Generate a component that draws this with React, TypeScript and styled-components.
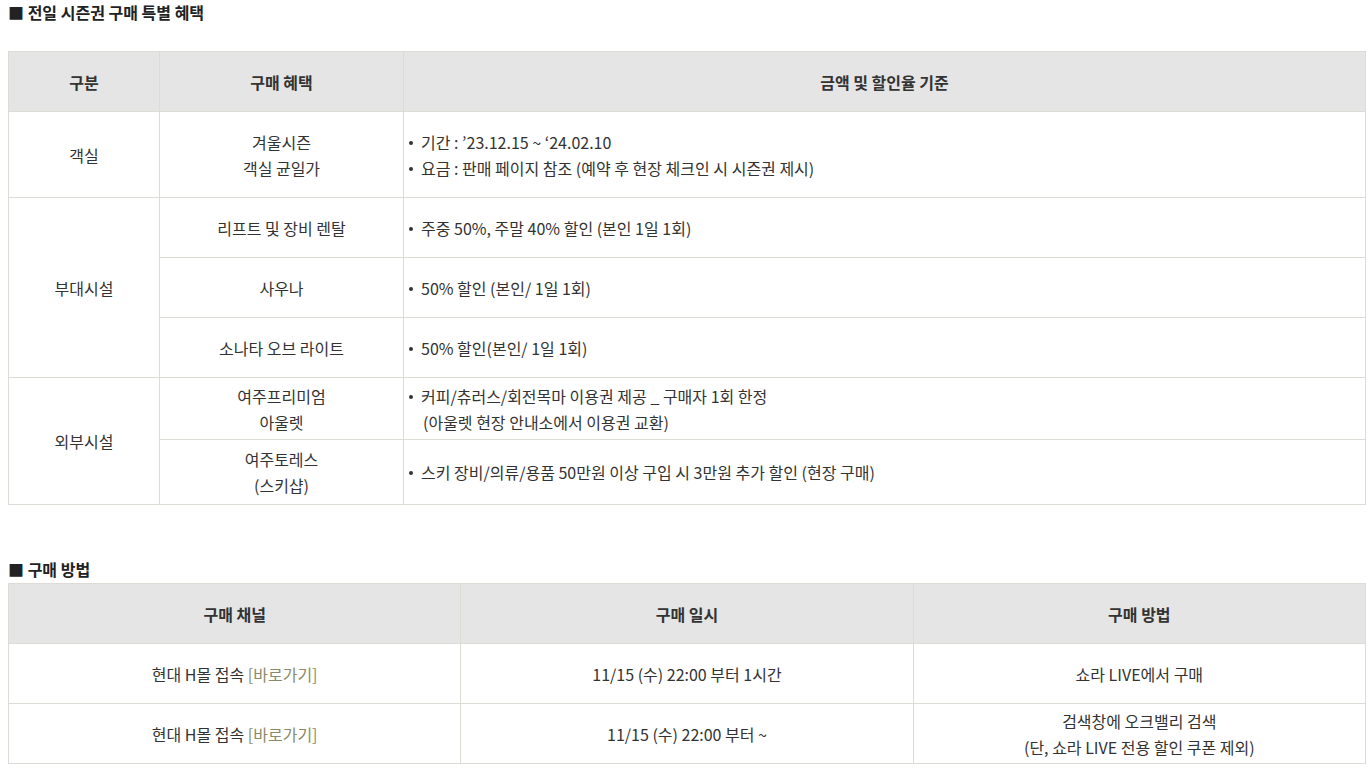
import React from "react";
import styled, { createGlobalStyle } from "styled-components";

const GlobalStyle = createGlobalStyle`
  body {
    margin: 0;
    background: #fff;
    font-family: "Noto Sans CJK KR", "Noto Sans", sans-serif;
    color: #333;
  }
`;

const Page = styled.div`
  padding: 0 4px 0 8px;
  display: flex;
  flex-direction: column;
`;

const Title = styled.h3<{ $gap: number }>`
  margin: 0 0 ${(p) => p.$gap}px;
  font-size: 16px;
  line-height: 24px;
  font-weight: 700;
  color: #222;
`;

const Table = styled.table`
  width: 100%;
  border-collapse: collapse;
  table-layout: fixed;
  font-size: 16px;
  line-height: 26px;
`;

const Th = styled.th`
  height: 59px;
  padding: 0 8px;
  background: #e5e5e5;
  border: 1px solid #dddbd6;
  font-weight: 700;
  color: #333;
  text-align: center;
`;

const Row = styled.tr<{ $h: number }>`
  height: ${(p) => p.$h}px;
`;

const Td = styled.td<{ $left?: boolean }>`
  padding: 0 5px;
  border: 1px solid #dddbd6;
  text-align: ${(p) => (p.$left ? "left" : "center")};
  vertical-align: middle;
  color: #333;
`;

const List = styled.ul`
  list-style: none;
  margin: 0;
  padding: 0;
`;

const Item = styled.li`
  display: flex;
`;

const Dot = styled.span`
  flex: 0 0 12px;
  height: 26px;
  display: flex;
  align-items: center;
  &::before {
    content: "";
    width: 4px;
    height: 4px;
    margin-top: 2px;
    border-radius: 50%;
    background: #333;
  }
`;

const Indent = styled.span`
  padding-left: 2px;
`;

const Link = styled.a`
  color: #8a8a6a;
  text-decoration: none;
`;

const Spacer = styled.div`
  height: 52px;
`;

const Bullets = ({ items }: { items: React.ReactNode[] }) => (
  <List>
    {items.map((t, i) => (
      <Item key={i}>
        <Dot />
        <span>{t}</span>
      </Item>
    ))}
  </List>
);

const App = () => (
  <Page>
    <GlobalStyle />
    <Title $gap={27}>■ 전일 시즌권 구매 특별 혜택</Title>
    <Table>
      <colgroup>
        <col style={{ width: 151 }} />
        <col style={{ width: 244 }} />
        <col />
      </colgroup>
      <thead>
        <tr>
          <Th>구분</Th>
          <Th>구매 혜택</Th>
          <Th>금액 및 할인율 기준</Th>
        </tr>
      </thead>
      <tbody>
        <Row $h={86}>
          <Td>객실</Td>
          <Td>
            겨울시즌
            <br />
            객실 균일가
          </Td>
          <Td $left>
            <Bullets
              items={[
                "기간 : ’23.12.15 ~ ‘24.02.10",
                "요금 : 판매 페이지 참조 (예약 후 현장 체크인 시 시즌권 제시)",
              ]}
            />
          </Td>
        </Row>
        <Row $h={60}>
          <Td rowSpan={3}>부대시설</Td>
          <Td>리프트 및 장비 렌탈</Td>
          <Td $left>
            <Bullets items={["주중 50%, 주말 40% 할인 (본인 1일 1회)"]} />
          </Td>
        </Row>
        <Row $h={60}>
          <Td>사우나</Td>
          <Td $left>
            <Bullets items={["50% 할인 (본인/ 1일 1회)"]} />
          </Td>
        </Row>
        <Row $h={60}>
          <Td>소나타 오브 라이트</Td>
          <Td $left>
            <Bullets items={["50% 할인(본인/ 1일 1회)"]} />
          </Td>
        </Row>
        <Row $h={62}>
          <Td rowSpan={2}>외부시설</Td>
          <Td>
            여주프리미엄
            <br />
            아울렛
          </Td>
          <Td $left>
            <Bullets
              items={[
                <>
                  커피/츄러스/회전목마 이용권 제공 _ 구매자 1회 한정
                  <br />
                  <Indent>(아울렛 현장 안내소에서 이용권 교환)</Indent>
                </>,
              ]}
            />
          </Td>
        </Row>
        <Row $h={65}>
          <Td>
            여주토레스
            <br />
            (스키샵)
          </Td>
          <Td $left>
            <Bullets
              items={[
                "스키 장비/의류/용품 50만원 이상 구입 시 3만원 추가 할인 (현장 구매)",
              ]}
            />
          </Td>
        </Row>
      </tbody>
    </Table>

    <Spacer />
    <Title $gap={2}>■ 구매 방법</Title>
    <Table>
      <thead>
        <tr>
          <Th>구매 채널</Th>
          <Th>구매 일시</Th>
          <Th>구매 방법</Th>
        </tr>
      </thead>
      <tbody>
        <Row $h={60}>
          <Td>
            현대 H몰 접속 <Link href="#">[바로가기]</Link>
          </Td>
          <Td>11/15 (수) 22:00 부터 1시간</Td>
          <Td>쇼라 LIVE에서 구매</Td>
        </Row>
        <Row $h={60}>
          <Td>
            현대 H몰 접속 <Link href="#">[바로가기]</Link>
          </Td>
          <Td>11/15 (수) 22:00 부터 ~</Td>
          <Td>
            검색창에 오크밸리 검색
            <br />
            (단, 쇼라 LIVE 전용 할인 쿠폰 제외)
          </Td>
        </Row>
      </tbody>
    </Table>
  </Page>
);

export default App;
